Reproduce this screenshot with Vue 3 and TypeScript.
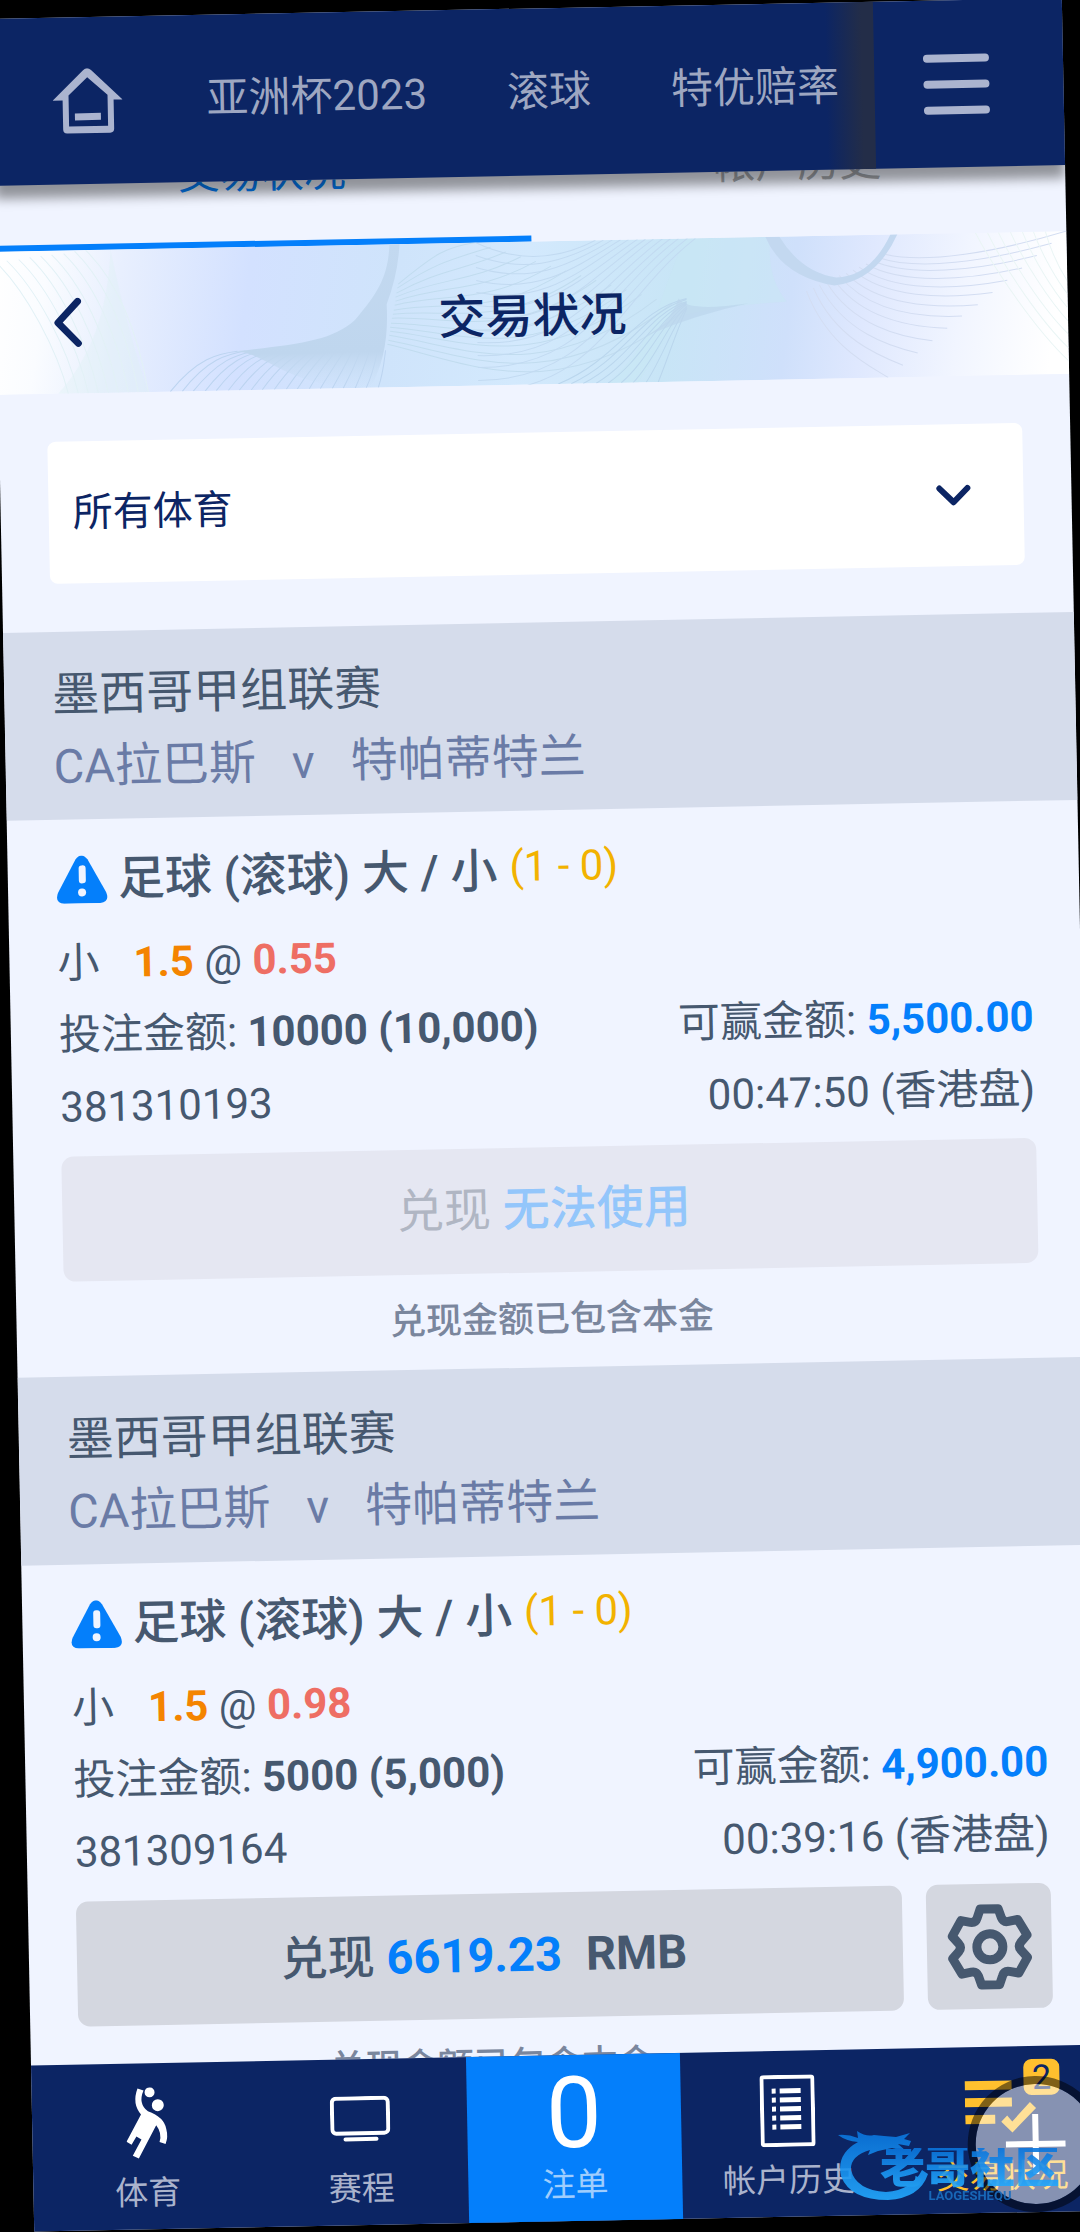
<script setup lang="ts">
import { ref } from 'vue'

interface Bet {
  id: string
  league: string
  home: string
  away: string
  market: string
  score: string
  pick: string
  line: string
  odds: string
  stake: string
  win: string
  time: string
  cashOut: string | null
}

const bets: Bet[] = [
  {
    id: '381310193',
    league: '墨西哥甲组联赛',
    home: 'CA拉巴斯',
    away: '特帕蒂特兰',
    market: '足球 (滚球) 大 / 小',
    score: '(1 - 0)',
    pick: '小',
    line: '1.5',
    odds: '0.55',
    stake: '10000 (10,000)',
    win: '5,500.00',
    time: '00:47:50 (香港盘)',
    cashOut: null,
  },
  {
    id: '381309164',
    league: '墨西哥甲组联赛',
    home: 'CA拉巴斯',
    away: '特帕蒂特兰',
    market: '足球 (滚球) 大 / 小',
    score: '(1 - 0)',
    pick: '小',
    line: '1.5',
    odds: '0.98',
    stake: '5000 (5,000)',
    win: '4,900.00',
    time: '00:39:16 (香港盘)',
    cashOut: '6619.23',
  },
]

const topLinks = ['亚洲杯2023', '滚球', '特优赔率']
const sport = ref('all')

type Point = [number, number]

// Six-toothed gear outline, one tooth and one rounded valley per 60 degree step.
function gearPath(): string {
  const step: Point[] = [[-9, -38], [9, -38], [12, -29], [14, -24], [19, -25]]
  let d = ''
  for (let k = 0; k < 6; k++) {
    const a = (k * Math.PI) / 3
    const p = step.map(([x, y]) => {
      const px = x * Math.cos(a) - y * Math.sin(a)
      const py = x * Math.sin(a) + y * Math.cos(a)
      return `${px.toFixed(1)} ${py.toFixed(1)}`
    })
    d += `${k ? 'L' : 'M'}${p[0]} L${p[1]} L${p[2]} Q${p[3]} ${p[4]} `
  }
  return d + 'Z'
}
const gear = gearPath()

// Blends two cubic curves into a family of evenly spaced lines.
function family(a: number[], b: number[], count: number): string {
  let d = ''
  for (let i = 0; i <= count; i++) {
    const t = i / count
    const v = a.map((n, j) => Math.round(n + (b[j] - n) * t))
    d += `M${v[0]} ${v[1]}C${v[2]} ${v[3]} ${v[4]} ${v[5]} ${v[6]} ${v[7]}`
  }
  return d
}
const waves = [
  { d: family([0, 10, 30, 40, 60, 100, 70, 143], [90, 0, 120, 30, 140, 80, 150, 143], 8), color: '#e2f1f6' },
  { d: family([172, 143, 200, 110, 220, 106, 240, 104], [380, 143, 385, 130, 386, 120, 388, 106], 18), color: '#bcd4f0' },
  { d: family([402, 40, 440, 10, 450, 4, 480, 0], [390, 100, 470, 120, 560, 170, 690, 70], 14), color: '#c1dcef' },
  { d: family([480, 0, 520, 20, 560, 20, 600, 0], [480, 150, 600, 150, 620, 60, 700, 0], 12), color: '#c2daf1' },
  { d: family([560, 143, 620, 120, 640, 70, 690, 60], [660, 143, 670, 120, 680, 90, 690, 70], 8), color: '#bad6ed' },
  { d: family([890, 20, 930, 30, 1000, 20, 1071, 0], [810, 55, 830, 110, 870, 130, 890, 143], 12), color: '#d3ddf2' },
  { d: family([980, 0, 1000, 40, 1040, 100, 1071, 130], [1050, 0, 1055, 20, 1065, 40, 1071, 50], 6), color: '#eaf5f5' },
]
</script>

<template>
  <div class="stage">
    <div class="screen">
      <header class="topbar">
        <a href="#home" class="home" aria-label="首页">
          <svg width="70" height="66" viewBox="0 0 70 66" fill="none">
            <path fill="#abb4cf" fill-rule="evenodd" d="M35 0Q37 0 39 2L70 32H61V61Q61 65 57 65H14Q10 65 10 61V32H0L31 2Q33 0 35 0ZM35 9L16 27V58H55V27Z" />
            <path fill="#abb4cf" d="M22 45H48V52H22Z" />
          </svg>
        </a>
        <nav class="links">
          <a v-for="t in topLinks" :key="t" href="#top">{{ t }}</a>
        </nav>
        <button class="menu" type="button" aria-label="菜单">
          <i /><i /><i />
        </button>
      </header>

      <main class="content">
        <nav class="tabs">
          <a href="#status" class="active">交易状况</a>
          <a href="#history">帐户历史</a>
        </nav>

        <section class="banner">
          <svg class="art" viewBox="0 0 1071 143" preserveAspectRatio="none" aria-hidden="true">
            <defs>
              <linearGradient id="sky" x1="0" y1="0" x2="1" y2="0.02">
                <stop offset="0" stop-color="#ffffff" />
                <stop offset="0.05" stop-color="#fafcff" />
                <stop offset="0.12" stop-color="#e8effe" />
                <stop offset="0.24" stop-color="#d3e1ff" />
                <stop offset="0.38" stop-color="#cfe4fb" />
                <stop offset="0.5" stop-color="#d3e9fd" />
                <stop offset="0.64" stop-color="#c8e5f6" />
                <stop offset="0.75" stop-color="#cfe0fb" />
                <stop offset="0.82" stop-color="#dfe8fe" />
                <stop offset="0.91" stop-color="#f1f5ff" />
                <stop offset="1" stop-color="#ffffff" />
              </linearGradient>
              <linearGradient id="fold" x1="0" y1="0" x2="0" y2="1">
                <stop offset="0" stop-color="#c3d9f0" />
                <stop offset="0.75" stop-color="#bfd6ee" />
                <stop offset="1" stop-color="#c8def5" stop-opacity="0" />
              </linearGradient>
            </defs>
            <rect width="1071" height="143" fill="url(#sky)" />
            <path fill="#dcf2f3" opacity="0.35" d="M60 143Q110 90 115 0Q130 80 150 143Z" />
            <path fill="#c7e8f3" opacity="0.5" d="M610 143Q650 110 665 60Q680 20 690 0H775Q770 40 790 65Q700 70 680 80L640 143Z" />
            <path v-for="(w, i) in waves" :key="i" :d="w.d" :stroke="w.color" fill="none" stroke-width="1" />
            <path fill="url(#fold)" d="M394 0C392 30 384 46 358 75C334 96 300 98 238 104C270 106 290 143 372 143Q392 110 390 60Q402 30 404 0Z" />
            <path fill="#c3d8f0" d="M770 0Q786 40 838 50Q880 46 902 0H895Q874 42 840 42Q805 36 784 0Z" />
            <path fill="#bcd5ec" opacity="0.7" d="M650 96Q672 86 682 60Q690 74 752 66Q700 76 650 96Z" />
          </svg>
          <button class="back" type="button" aria-label="返回">
            <svg width="28" height="50" viewBox="0 0 28 50" fill="none" stroke="#0c2564" stroke-width="7" stroke-linecap="round" stroke-linejoin="round"><path d="M24 4L4 25L24 46" /></svg>
          </button>
          <h1>交易状况</h1>
        </section>

        <div class="filter">
          <select v-model="sport" aria-label="体育项目">
            <option value="all">所有体育</option>
            <option value="soccer">足球</option>
          </select>
          <svg class="caret" width="36" height="22" viewBox="0 0 36 22" fill="none" stroke="#0c2564" stroke-width="6" stroke-linecap="round" stroke-linejoin="round"><path d="M4 4L18 18L32 4" /></svg>
        </div>

        <article v-for="b in bets" :key="b.id" class="bet">
          <header class="match">
            <h2>{{ b.league }}</h2>
            <p><span>{{ b.home }}</span><span>v</span><span>{{ b.away }}</span></p>
          </header>
          <div class="detail">
            <div class="market">
              <svg width="52" height="48" viewBox="0 0 52 48">
                <path fill="#047ffb" d="M26 0Q29 0 32 4L50 37Q54 47 44 48H8Q-2 47 2 37L20 4Q23 0 26 0Z" />
                <rect x="23" y="10" width="7" height="18" rx="3" fill="#f0f4ff" />
                <circle cx="26" cy="37" r="4" fill="#f0f4ff" />
              </svg>
              <h3>{{ b.market }}</h3>
              <span class="score">{{ b.score }}</span>
            </div>
            <p class="row"><span><span class="pick">{{ b.pick }}</span><b class="line">{{ b.line }}</b> @ <b class="odds">{{ b.odds }}</b></span></p>
            <p class="row"><span>投注金额: <b>{{ b.stake }}</b></span><span>可赢金额: <b class="win">{{ b.win }}</b></span></p>
            <p class="row"><span>{{ b.id }}</span><span>{{ b.time }}</span></p>
            <div class="actions">
              <div class="cash">
                <button v-if="b.cashOut" type="button">兑现 <b>{{ b.cashOut }}</b><span class="unit">RMB</span></button>
                <button v-else type="button" disabled>兑现 <em>无法使用</em></button>
                <p class="note">兑现金额已包含本金</p>
              </div>
              <button v-if="b.cashOut" class="gear" type="button" aria-label="设置">
                <svg width="86" height="86" viewBox="-43 -43 86 86" fill="none" stroke="#46586f" stroke-width="9" stroke-linejoin="round">
                  <path :d="gear" />
                  <circle r="13" />
                </svg>
              </button>
            </div>
          </div>
        </article>
      </main>

      <footer class="bottom">
        <nav>
          <a href="#sports">
            <span class="icon">
              <svg width="42" height="72" viewBox="0 0 42 72" fill="#fff">
                <circle cx="24" cy="5" r="5" /><circle cx="32" cy="18" r="6" />
                <path d="M12 1L18 3Q12 16 22 24Q38 30 40 42Q42 50 39 57L33 55Q36 46 30 38L12 71L6 68L15 52L10 49L5 57L0 54L15 27Q6 16 12 1Z" />
              </svg>
            </span>
            <span>体育</span>
          </a>
          <a href="#schedule">
            <span class="icon">
              <svg width="60" height="46" viewBox="0 0 60 46" fill="none" stroke="#fff" stroke-width="4" stroke-linecap="round"><rect x="2" y="2" width="56" height="35" rx="4" /><path d="M15 43H46" /></svg>
            </span>
            <span>赛程</span>
          </a>
          <a href="#slip" class="slip">
            <span class="icon count">0</span>
            <span>注单</span>
          </a>
          <a href="#history">
            <span class="icon">
              <svg width="55" height="72" viewBox="0 0 55 72" fill="none" stroke="#fff" stroke-width="4"><rect x="2" y="2" width="51" height="68" rx="2" /><path d="M12 16H16M12 25H16M12 34H16M12 43H16M12 52H16M20 16H41M20 25H41M20 34H41M20 43H41M20 52H41" stroke-width="5" /></svg>
            </span>
            <span>帐户历史</span>
          </a>
          <a href="#status" class="current">
            <span class="icon">
              <svg width="72" height="54" viewBox="0 0 72 54" fill="#ffc02e"><path d="M0 1H47V10H0ZM0 18H47V27H0ZM0 35H30V44H0ZM36 42L42 36L47 42L65 23L71 29L47 53Z" /></svg>
              <span class="badge">2</span>
            </span>
            <span>交易状况</span>
          </a>
        </nav>
        <button class="float" type="button" aria-label="更多">
          <svg width="60" height="60" viewBox="0 0 60 60" stroke="#fff" stroke-width="6"><path d="M0 30H60M30 0V60" /></svg>
        </button>
      </footer>
    </div>

    <div class="brand">
      <svg width="92" height="80" viewBox="0 0 92 80">
        <defs>
          <linearGradient id="tide" x1="0" y1="0" x2="0" y2="1">
            <stop offset="0" stop-color="#0a74dc" /><stop offset="1" stop-color="#24aaff" />
          </linearGradient>
        </defs>
        <path fill="url(#tide)" d="M0 11Q10 10 20 14L19 7Q28 13 36 11L46 12L58 13L72 9L66 15L73 17L71 22L60 20L68 27L54 24L40 27L30 31L32 26Q12 32 13 46Q18 66 48 68Q74 66 84 46L90 50Q82 74 50 76Q12 76 3 52Q-2 30 20 18Q8 17 0 11Z" />
      </svg>
      <div class="words">
        <strong>老哥社区</strong>
        <small>LAOGESHEQU</small>
      </div>
    </div>
  </div>
</template>

<style>
html,
body {
  margin: 0;
  background: #000;
}
</style>

<style scoped>
.stage {
  position: relative;
  height: 100vh;
  overflow: hidden;
  background: #000;
  font-family: Roboto, "Noto Sans CJK SC", sans-serif;
  color: #46586f;
}
.stage * {
  box-sizing: border-box;
}
h1, h2, h3, p {
  margin: 0;
  font-weight: 400;
}
button {
  font-family: inherit;
  color: inherit;
  border: 0;
  padding: 0;
}
a {
  text-decoration: none;
  color: inherit;
}
svg {
  display: block;
  flex: none;
}
.screen {
  display: flex;
  flex-direction: column;
  height: calc(100vh - 19px);
  margin: 19px 18px 0 -9px;
  background: #f0f4ff;
  transform: rotate(-1.12deg);
  transform-origin: 0 0;
}
.topbar {
  position: relative;
  z-index: 1;
  flex: none;
  display: flex;
  align-items: center;
  height: 167px;
  padding-left: 60px;
  background: #0c2564;
  box-shadow: 0 13px 12px rgba(0, 0, 0, 0.4);
}
.links {
  flex: 1;
  align-self: stretch;
  display: flex;
  align-items: center;
  gap: 80px;
  padding-left: 84px;
  font-size: 42px;
  line-height: 60px;
  white-space: nowrap;
  color: #9ea7c1;
  background: linear-gradient(to left, #232d48 12px, rgba(35, 45, 72, 0) 48px);
}
.menu {
  width: 189px;
  padding-left: 49px;
  background: none;
  display: flex;
  flex-direction: column;
  gap: 18px;
}
.menu i {
  width: 66px;
  height: 8px;
  border-radius: 4px;
  background: #abb4cf;
}
.content {
  flex: 1;
  min-height: 0;
  overflow: hidden;
}
.tabs {
  display: flex;
  margin-top: -83px;
}
.tabs a {
  flex: 1;
  height: 149px;
  border-bottom: 6px solid transparent;
  display: flex;
  align-items: center;
  justify-content: center;
  font-size: 42px;
  color: #a3a6ac;
}
.tabs .active {
  color: #047ffb;
  border-color: #047ffb;
}
.banner {
  position: relative;
  display: flex;
  align-items: center;
  height: 143px;
  padding: 0 57px;
}
.art {
  position: absolute;
  inset: 0;
  width: 100%;
  height: 100%;
}
.back {
  position: relative;
  width: 28px;
  background: none;
}
.banner h1 {
  position: relative;
  flex: 1;
  padding: 6px 28px 0 0;
  text-align: center;
  font-size: 47px;
  line-height: 72px;
  font-weight: 500;
  color: #0c2564;
}
.filter {
  position: relative;
  padding: 48px;
}
.filter select {
  display: block;
  width: 100%;
  height: 142px;
  padding: 0 24px;
  border: 0;
  border-radius: 8px;
  appearance: none;
  background: #fff;
  font-family: inherit;
  font-size: 40px;
  color: #0c2564;
}
.caret {
  position: absolute;
  right: 100px;
  top: 108px;
  pointer-events: none;
}
.match {
  padding: 27px 48px 17px;
  background: #d5dceb;
  font-size: 47px;
  line-height: 72px;
}
.match h2 {
  font-size: 47px;
}
.match p {
  display: flex;
  gap: 36px;
  color: #6a7ba6;
}
.detail {
  padding: 24px 48px 0;
}
.market {
  display: flex;
  align-items: center;
  height: 72px;
  margin-bottom: 12px;
}
.market h3 {
  margin: 0 12px 0 10px;
  font-size: 47px;
  line-height: 72px;
  font-weight: 500;
}
.score {
  align-self: flex-start;
  font-size: 42px;
  line-height: 63px;
  color: #f2b200;
}
.row {
  display: flex;
  justify-content: space-between;
  font-size: 42px;
  line-height: 72px;
}
.pick {
  margin-right: 34px;
}
.line {
  color: #f48400;
}
.odds {
  color: #ee6e64;
}
.win {
  color: #047ffb;
}
.actions {
  display: flex;
  gap: 24px;
  margin-top: 13px;
}
.cash {
  flex: 1;
}
.cash button {
  width: 100%;
  height: 125px;
  padding: 0 12px 10px 0;
  border-radius: 12px;
  background: #d4d7e0;
  font-size: 47px;
  font-weight: 500;
}
.cash b {
  color: #047ffb;
}
.unit {
  margin-left: 24px;
  font-weight: 700;
}
.cash button:disabled {
  background: #e5e7f2;
  color: #b0b6c3;
  font-weight: 400;
}
.cash em {
  font-style: normal;
  font-weight: 500;
  color: #93c6fb;
}
.note {
  padding: 19px 0 20px;
  text-align: center;
  font-size: 36px;
  line-height: 56px;
  font-weight: 500;
  color: #7a869d;
}
.gear {
  width: 125px;
  height: 125px;
  border-radius: 12px;
  background: #d4d7e0;
  display: flex;
  align-items: center;
  justify-content: center;
}
.bottom {
  position: relative;
  z-index: 1;
  flex: none;
  background: #0c2564;
}
.bottom nav {
  display: flex;
  margin: 0 -5px 0 8px;
}
.bottom a {
  flex: 1 0 0;
  height: 166px;
  padding-top: 15px;
  display: flex;
  flex-direction: column;
  align-items: center;
  font-size: 33px;
  line-height: 50px;
  white-space: nowrap;
  color: #aab3cc;
}
.icon {
  position: relative;
  height: 90px;
  display: flex;
  align-items: center;
  color: #fff;
}
.bottom .slip {
  background: #047ffb;
  color: #9fcdfd;
}
.count {
  font-size: 99px;
  line-height: 84px;
  padding-bottom: 4px;
}
.bottom .current {
  color: #ffc02e;
}
.badge {
  position: absolute;
  right: -23px;
  top: -2px;
  width: 36px;
  height: 36px;
  border-radius: 8px;
  background: #ffc02e;
  color: #0c2564;
  font-size: 34px;
  line-height: 36px;
  text-align: center;
}
.float {
  position: absolute;
  right: 0;
  top: 30px;
  width: 136px;
  height: 136px;
  border: 8px solid rgba(0, 0, 0, 0.5);
  border-radius: 50%;
  background: rgba(255, 255, 255, 0.5);
  background-clip: padding-box;
  display: flex;
  align-items: center;
  justify-content: center;
}
.brand {
  position: absolute;
  z-index: 2;
  right: 20px;
  bottom: 28px;
  display: flex;
  align-items: flex-end;
  opacity: 0.9;
}
.brand svg {
  margin-right: -50px;
}
.words {
  display: flex;
  flex-direction: column;
  align-items: center;
}
.words strong {
  font-size: 45px;
  line-height: 40px;
  font-weight: 900;
  color: transparent;
  background: linear-gradient(#0a74dc, #24aaff);
  background-clip: text;
}
.words small {
  font-size: 13px;
  line-height: 16px;
  font-weight: 700;
  color: #1a6fc0;
}
</style>
